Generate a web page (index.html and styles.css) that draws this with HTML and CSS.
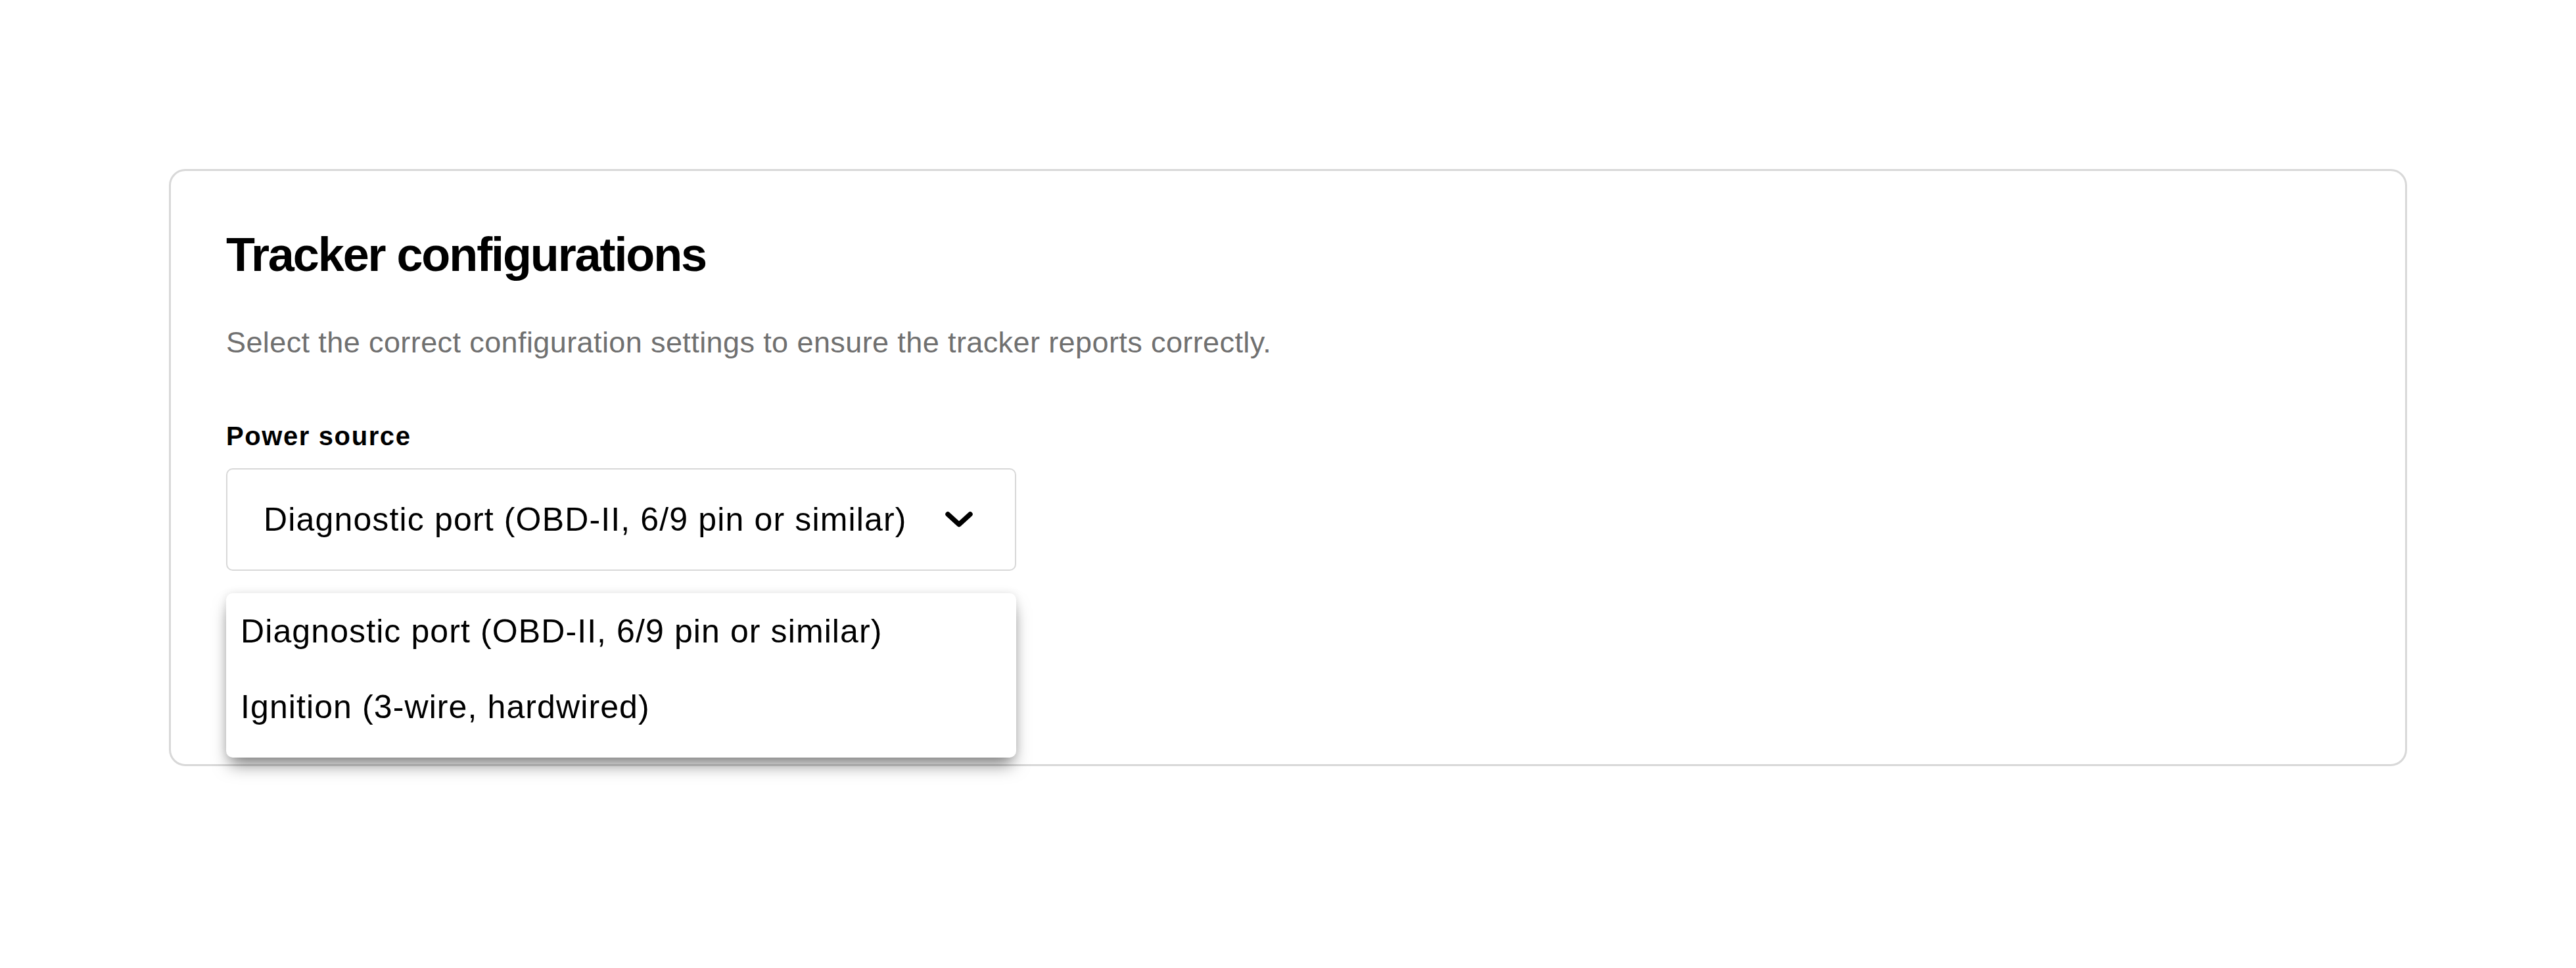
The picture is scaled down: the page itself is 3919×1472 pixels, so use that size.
FILE: index.html
```html
<!DOCTYPE html>
<html lang="en">
<head>
<meta charset="utf-8">
<title>Tracker configurations</title>
<link rel="stylesheet" href="styles.css">
</head>
<body>
<main class="page">
  <section class="card">
    <h1 class="title">Tracker configurations</h1>
    <p class="subtitle">Select the correct configuration settings to ensure the tracker reports correctly.</p>
    <div class="field">
      <label class="label">Power source</label>
      <div class="select-wrap">
        <div class="select">
          <span class="select-value">Diagnostic port (OBD-II, 6/9 pin or similar)</span>
          <svg class="chevron" viewBox="0 0 42 24" width="42" height="24" aria-hidden="true">
            <polyline points="4,4 21,19.5 38,4" fill="none" stroke="#000" stroke-width="7.5" stroke-linecap="round" stroke-linejoin="round"/>
          </svg>
        </div>
        <ul class="menu">
          <li class="menu-item">Diagnostic port (OBD-II, 6/9 pin or similar)</li>
          <li class="menu-item">Ignition (3-wire, hardwired)</li>
        </ul>
      </div>
    </div>
  </section>
</main>
</body>
</html>
```

FILE: styles.css
```css
* { box-sizing: border-box; }
html, body { margin: 0; padding: 0; background: #ffffff; }
body {
  font-family: "Liberation Sans", Arial, Helvetica, sans-serif;
  color: #000000;
}
.page {
  padding: 257px;
}
.card {
  border: 3px solid #d8d8d8;
  border-radius: 25px;
  padding: 84px 85px 294px 84px;
  background: #ffffff;
}
.title {
  margin: 0;
  font-size: 72px;
  line-height: 86px;
  font-weight: 700;
  letter-spacing: -2.1px;
}
.subtitle {
  margin: 62px 0 0 0;
  font-size: 45px;
  line-height: 58px;
  color: #707070;
  letter-spacing: 0.4px;
}
.field {
  margin-top: 88px;
  width: 1202px;
}
.label {
  display: block;
  font-size: 40px;
  line-height: 50px;
  font-weight: 700;
  letter-spacing: 1.6px;
}
.select-wrap {
  position: relative;
  margin-top: 24px;
}
.select {
  display: flex;
  align-items: center;
  height: 156px;
  border: 2.5px solid #d8d8d8;
  border-radius: 10px;
  padding: 0 64px 0 55px;
}
.select-value {
  flex: 1;
  font-size: 50px;
  letter-spacing: 1.15px;
  white-space: nowrap;
}
.chevron {
  flex: none;
  display: block;
}
.menu {
  position: absolute;
  top: calc(100% + 34px);
  left: 0;
  width: 100%;
  margin: 0;
  padding: 0 0 20px 0;
  list-style: none;
  background: #ffffff;
  border-radius: 10px;
  box-shadow: 0 16px 26px -6px rgba(0, 0, 0, 0.5), 0 0 14px rgba(0, 0, 0, 0.1);
}
.menu-item {
  display: flex;
  align-items: center;
  height: 115px;
  padding-left: 22px;
  font-size: 50px;
  letter-spacing: 1.1px;
  white-space: nowrap;
}
```
